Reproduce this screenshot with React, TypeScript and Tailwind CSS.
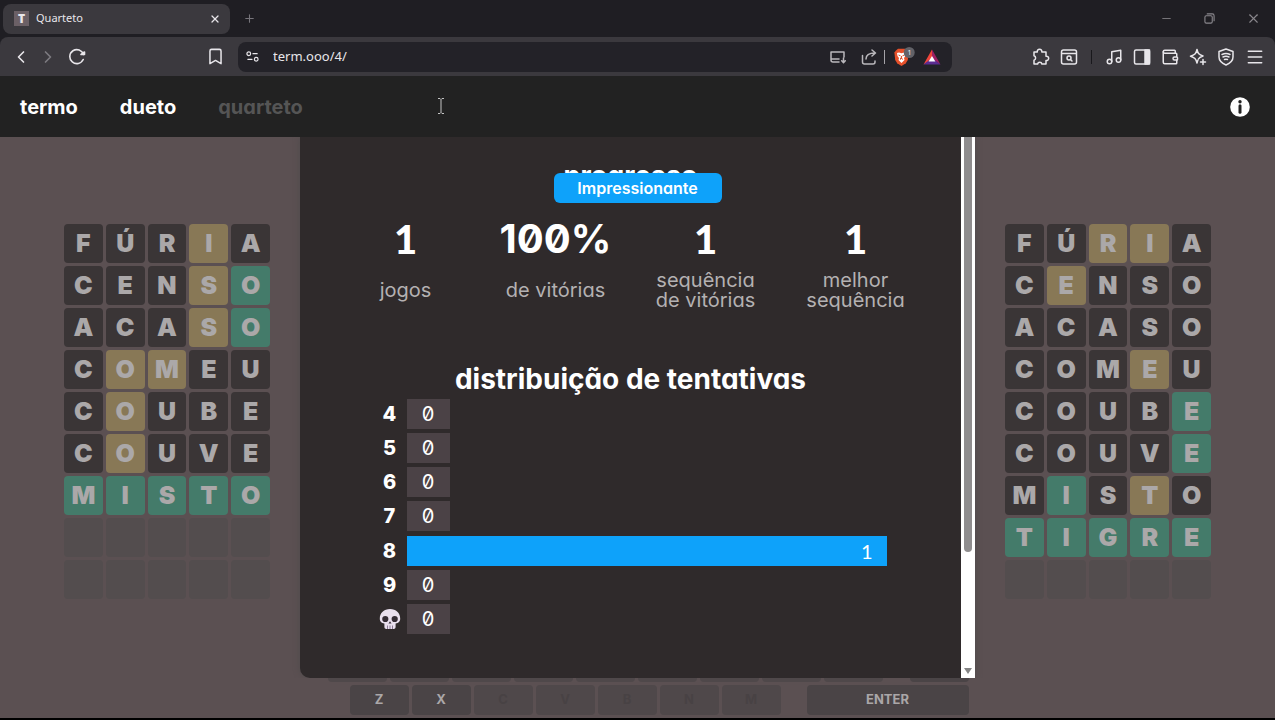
import {
  Bookmark, ChevronLeft, ChevronRight, Menu, Minus, Music, Plus, Wallet, X,
} from "lucide-react";

type Guess = [word: string, marks: string];

const leftBoard: Guess[] = [
  ["FÚRIA", "---y-"],
  ["CENSO", "---yg"],
  ["ACASO", "---yg"],
  ["COMEU", "-yy--"],
  ["COUBE", "-y---"],
  ["COUVE", "-y---"],
  ["MISTO", "ggggg"],
  ["     ", "     "],
  ["     ", "     "],
];

const rightBoard: Guess[] = [
  ["FÚRIA", "--yy-"],
  ["CENSO", "-y---"],
  ["ACASO", "-----"],
  ["COMEU", "---y-"],
  ["COUBE", "----g"],
  ["COUVE", "----g"],
  ["MISTO", "-g-y-"],
  ["TIGRE", "ggggg"],
  ["     ", "     "],
];

const tileColors: Record<string, string> = {
  "-": "bg-[#3a3536]",
  y: "bg-[#887856]",
  g: "bg-[#447b6a]",
  " ": "bg-[#534d4e]",
};

function Board({ guesses }: { guesses: Guess[] }) {
  return (
    <div className="grid w-[206px] grid-cols-5 gap-[3px]">
      {guesses.flatMap(([word, marks], row) =>
        word.split("").map((letter, col) => (
          <div
            key={`${row}-${col}`}
            className={`flex h-[39px] items-center justify-center rounded text-[25px] leading-none font-black text-[#aba8a9] ${tileColors[marks[col]]}`}
          >
            {letter}
          </div>
        )),
      )}
    </div>
  );
}

function Key({ label, used = false, wide = false }: { label: string; used?: boolean; wide?: boolean }) {
  return (
    <button
      className={`h-[30px] rounded text-[13px] font-bold ${wide ? "w-[162px]" : "w-[59px]"} ${used ? "bg-[#4f484a] text-[#484244]" : "bg-[#4a4446] text-[#aaa7a8]"}`}
    >
      {label}
    </button>
  );
}

function Keyboard() {
  return (
    <div className="flex flex-col gap-[3px] pb-[3px]">
      <div className="flex justify-between">
        <div className="flex gap-[3px]">
          {"ASDFGHJKL".split("").map((k) => (
            <Key key={k} label={k} used />
          ))}
        </div>
        <Key label="⌫" />
      </div>
      <div className="flex justify-between pl-[22px]">
        <div className="flex gap-[3px]">
          {"ZXCVBNM".split("").map((k) => (
            <Key key={k} label={k} used={k !== "Z" && k !== "X"} />
          ))}
        </div>
        <Key label="ENTER" wide />
      </div>
    </div>
  );
}

const stats = [
  { value: "1", lines: ["jogos"], font: "font-['Lato',sans-serif] font-black" },
  { value: "100%", lines: ["de vitórias"], font: "font-bold" },
  { value: "1", lines: ["sequência", "de vitórias"], font: "font-['Lato',sans-serif] font-black" },
  { value: "1", lines: ["melhor", "sequência"], font: "font-['Lato',sans-serif] font-black" },
];

function Skull() {
  return (
    <svg viewBox="0 0 22 22" className="size-[22px]" aria-label="derrotas">
      <path d="M11 1C5 1 .8 5 .8 10.500c0 3.300 1.600 4.300 4.600 5v3.500c0 1.200.8 2 2 2h7.200c1.200 0 2-.8 2-2v-3.500c3-.7 4.600-1.700 4.600-5C21.200 5 17 1 11 1Z" fill="#e9dfee" />
      <circle cx="6.300" cy="11" r="3.100" fill="#352c35" />
      <circle cx="15.700" cy="11" r="3.100" fill="#352c35" />
      <path d="M11 13.200 9.500 15.600h3Z" fill="#352c35" />
      <path d="M8.500 17.500V21M11 17.500V21M13.500 17.500V21" stroke="#8d7c98" />
    </svg>
  );
}

const distribution = [
  { tries: "4", count: 0 },
  { tries: "5", count: 0 },
  { tries: "6", count: 0 },
  { tries: "7", count: 0 },
  { tries: "8", count: 1 },
  { tries: "9", count: 0 },
  { tries: "skull", count: 0 },
];

function StatsPanel() {
  return (
    <section className="flex h-full w-[675px] overflow-hidden rounded-bl-[10px] bg-[#2f2a2b] text-white shadow-[0_0_6px_#4f4a4b]">
      <div className="flex min-w-0 flex-1 flex-col items-center pt-[20px]">
        <h2 className="text-[27px] leading-[38px] font-bold">progresso</h2>
        <div className="mt-[21px] grid w-[600px] grid-cols-4">
          {stats.map((s, i) => (
            <div key={i} className="text-center">
              <div className={`text-[40px] leading-[46px] ${s.font}`}>{s.value}</div>
              <div className="mt-[8px] flex h-[40px] flex-col justify-center text-[20px] leading-[20px] text-[#b4b1b2]">
                {s.lines.map((l) => (
                  <span key={l}>{l}</span>
                ))}
              </div>
            </div>
          ))}
        </div>
        <h2 className="mt-[50px] text-[28px] leading-[38px] font-bold">distribuição de tentativas</h2>
        <ul className="flex h-[237px] w-[512px] flex-col justify-between text-[20px]">
          {distribution.map((d) => (
            <li key={d.tries} className="flex h-[31px] items-center gap-[4px]">
              <span className="flex w-[28px] justify-center pl-[2px] font-extrabold">
                {d.tries === "skull" ? <Skull /> : d.tries}
              </span>
              <span
                className={`flex h-[30px] items-center ${d.count ? "flex-1 justify-end bg-[#0ea2fa] pr-[14px] font-['Lato',sans-serif]" : "w-[43px] justify-center bg-[#4b4246]"}`}
              >
                {d.count}
              </span>
            </li>
          ))}
        </ul>
      </div>
      <div className="flex w-[14px] flex-col items-center justify-between bg-white">
        <div className="h-[415px] w-[8px] rounded-b bg-[#8f8d8e]" />
        <svg viewBox="0 0 8 6" className="mb-1 h-[6px] w-[8px]">
          <path d="M0 0h8L4 6Z" fill="#858585" />
        </svg>
      </div>
    </section>
  );
}

const stroke = { fill: "none", stroke: "currentColor", strokeWidth: 1.5, strokeLinecap: "round", strokeLinejoin: "round" } as const;

function BrowserBar() {
  return (
    <div className="bg-[#1f1e23] font-['Noto_Sans',sans-serif] text-[#e8e6ea]">
      <div className="flex h-[37px] items-center">
        <div className="ml-[3px] flex h-[30px] w-[227px] items-center rounded-lg bg-[#3b393e] pl-[11px] pr-[9px]">
          <span className="flex size-[15px] items-center justify-center bg-[#6b6066] text-[12px] font-black">T</span>
          <span className="ml-[7px] flex-1 text-[11px]">Quarteto</span>
          <button aria-label="Fechar aba"><X size={12} strokeWidth={2.500} /></button>
        </div>
        <button aria-label="Nova aba" className="ml-[13px] text-[#77757b]"><Plus size={13} /></button>
        <div className="ml-auto flex items-center gap-[31px] pr-[14px] text-[#8a888d]">
          <button aria-label="Minimizar"><Minus size={13} strokeWidth={1.500} /></button>
          <button aria-label="Restaurar">
            <svg viewBox="0 0 12 12" className="size-[11px]" {...stroke} strokeWidth={1.200}>
              <rect x="1" y="3" width="8" height="8" rx="1.500" />
              <path d="M3.500 1H9a2 2 0 0 1 2 2v5.500" />
            </svg>
          </button>
          <button aria-label="Fechar"><X size={15} strokeWidth={1.700} /></button>
        </div>
      </div>
      <div className="flex h-[39px] items-center rounded-t-lg bg-[#3b393e] pl-[11px] pr-[10px]">
        <button aria-label="Voltar"><ChevronLeft size={20} /></button>
        <button aria-label="Avançar" className="ml-[7px] text-[#7d7b80]"><ChevronRight size={20} /></button>
        <button aria-label="Recarregar" className="ml-[10px]">
          <svg viewBox="0 0 18 18" className="size-[18px]" {...stroke} strokeWidth={1.600}>
            <path d="M15.200 11.500A7 7 0 1 1 15.500 6.500" />
            <path d="M13 6.500h3.500V4Z" fill="currentColor" />
          </svg>
        </button>
        <button aria-label="Favoritos" className="ml-[120px]"><Bookmark size={19} strokeWidth={1.900} /></button>
        <div className="ml-[13px] flex h-[30px] w-[714px] items-center rounded-lg bg-[#232228] pl-[8px] pr-[9px]">
          <svg viewBox="0 0 14 14" className="size-[13px]" {...stroke} strokeWidth={1.300}>
            <circle cx="3" cy="4" r="2" /><path d="M7.500 4H12M2 10h4.500" /><circle cx="11" cy="10" r="2" />
          </svg>
          <input aria-label="Endereço" defaultValue="term.ooo/4/" className="ml-[14px] min-w-0 flex-1 bg-transparent text-[13px] outline-none" />
          <svg viewBox="0 0 16 14" className="h-[14px] w-[16px] text-[#bab8bc]" {...stroke}>
            <path d="M9 12H3a2 2 0 0 1-2-2V2h13v5M1 9h8M13.500 8v4.500M11.700 10.800l1.800 1.800 1.800-1.800" />
          </svg>
          <svg viewBox="0 0 16 16" className="ml-[15px] size-[16px] text-[#bab8bc]" {...stroke}>
            <path d="M1.500 6.500V13a2 2 0 0 0 2 2H12a2 2 0 0 0 2-2v-1M5 10c0-4 3-6 9-6M11 1l3.500 3L11 7" />
          </svg>
          <span className="ml-[7px] h-[14px] w-px bg-[#a5a3a8]" />
          <svg viewBox="0 0 22 20" className="ml-[8px] h-[20px] w-[22px]">
            <path d="m3 3.500 2-1.700h7l2 1.700 1.600 2-.8 7.500-2 3.200L8.500 19l-4.300-2.800-2-3.200L1.400 5.500Z" fill="#e6502a" />
            <path d="m4 6 2-.5 2.500.8 2.500-.8 2 .5-.5 3-1.500 2 .5 2-3 3-3-3 .5-2-1.500-2Z" fill="#fff" />
            <path d="m5.500 8 2 .8M11.500 8l-2 .8M8.500 9v2.500l-1.500.9M8.500 11.500l1.500.9" stroke="#e6502a" />
            <circle cx="16.200" cy="5.500" r="5.500" fill="#626268" />
            <text x="14.500" y="8.200" fontSize="7" fill="#eee" fontFamily="Noto Sans">1</text>
          </svg>
          <svg viewBox="0 0 18 16" className="ml-[8px] mr-[2px] h-[16px] w-[18px]">
            <path d="M9 .5.500 15.500 9 10.500Z" fill="#f0453a" />
            <path d="M9 .5 17.500 15.500 9 10Z" fill="#9e1f63" />
            <path d="M.5 15.500h17L9 9Z" fill="#5b2c91" />
            <path d="m9 7-3.400 5.600h6.800Z" fill="#fff" />
          </svg>
        </div>
        <div className="ml-auto flex items-center gap-[10px]">
          <svg viewBox="0 0 18 18" className="size-[18px]" {...stroke}>
            <path d="M2 4h3.300a2.300 2.300 0 1 1 4.500 0H14v4.200a2.200 2.200 0 1 1 0 4.300V16H9.900a2.200 2.200 0 0 0-4.300 0H2v-3.800a2.300 2.300 0 0 0 0-4.400Z" />
          </svg>
          <svg viewBox="0 0 18 18" className="size-[18px]" {...stroke}>
            <rect x="1.500" y="2" width="15" height="14" rx="2" /><path d="M2 5.500h14" /><circle cx="9" cy="10" r="2" /><path d="m10.500 11.500 1.500 1.500" />
          </svg>
          <span className="mx-[3px] h-[14px] w-px bg-[#19181c]" />
          <Music size={18} />
          <svg viewBox="0 0 18 18" className="size-[18px]" {...stroke}>
            <rect x="1.500" y="2" width="15" height="14" rx="1.500" /><path d="M12 2h4.500v14H12Z" fill="currentColor" />
          </svg>
          <Wallet size={18} />
          <svg viewBox="0 0 18 18" className="size-[18px]" {...stroke}>
            <path d="M8 1.500c.9 4 2 5.300 6 6.500-2.500.8-3.800 1.500-4.600 3M8 1.500C7 5.700 5.700 7 1.500 8.200 5.700 9.500 7 10.800 8 15c.3-1.300.6-2.200 1-3M14 11.500v5M11.500 14h5" />
          </svg>
          <svg viewBox="0 0 18 18" className="size-[18px]" {...stroke}>
            <path d="M9 1 2 3.500V9c0 4 3.500 6.500 7 8 3.500-1.500 7-4 7-8V3.500ZM5 6.500c2.500-1.200 5.500-1.200 8 0M6 9c2-.9 4-.9 6 0M7.500 11.500c1-.4 2-.4 3 0" />
          </svg>
          <button aria-label="Menu"><Menu size={20} strokeWidth={1.800} /></button>
        </div>
      </div>
    </div>
  );
}

export default function App() {
  return (
    <div className="flex min-h-screen flex-col border-b-2 border-black bg-[#5b5052] font-['Inter','Noto_Sans',sans-serif] [font-feature-settings:'zero','cv11']">
      <BrowserBar />
      <header className="relative flex h-[61px] items-center bg-[#222222] px-[20px] text-[20px] font-bold text-white">
        <nav className="flex gap-[42px]">
          <a href="#termo">termo</a>
          <a href="#dueto">dueto</a>
          <a href="#quarteto" className="text-[#555555]">quarteto</a>
        </nav>
        <svg viewBox="0 0 8 16" className="absolute top-[22px] left-[437px] h-[16px] w-[8px]" fill="none" stroke="#c4c4c4">
          <path d="M1 .5h2l1 1 1-1h2M4 1.500v13M1 15.500h2l1-1 1 1h2" />
        </svg>
        <button aria-label="Informações" className="ml-auto mr-[5px]">
          <svg viewBox="0 0 20 20" className="size-[20px]">
            <circle cx="10" cy="10" r="9.800" fill="#fff" />
            <circle cx="10" cy="4.800" r="1.700" fill="#222" />
            <path d="M10 8.800v6.400" stroke="#222" strokeWidth="3" strokeLinecap="round" />
          </svg>
        </button>
      </header>
      <main className="relative flex flex-1 flex-col justify-between">
        <div className="flex justify-between px-[64px] pt-[87px]">
          <Board guesses={leftBoard} />
          <Board guesses={rightBoard} />
        </div>
        <div className="mx-auto w-[662px] pl-[21px]">
          <Keyboard />
        </div>
        <div className="absolute inset-x-0 top-0 bottom-[40px] flex justify-center overflow-hidden">
          <StatsPanel />
        </div>
        <div role="status" className="absolute top-[36px] left-1/2 flex h-[30px] w-[168px] -translate-x-1/2 items-center justify-center rounded-md bg-[#0ea2fa] text-[16px] font-semibold text-white">
          Impressionante
        </div>
      </main>
    </div>
  );
}
